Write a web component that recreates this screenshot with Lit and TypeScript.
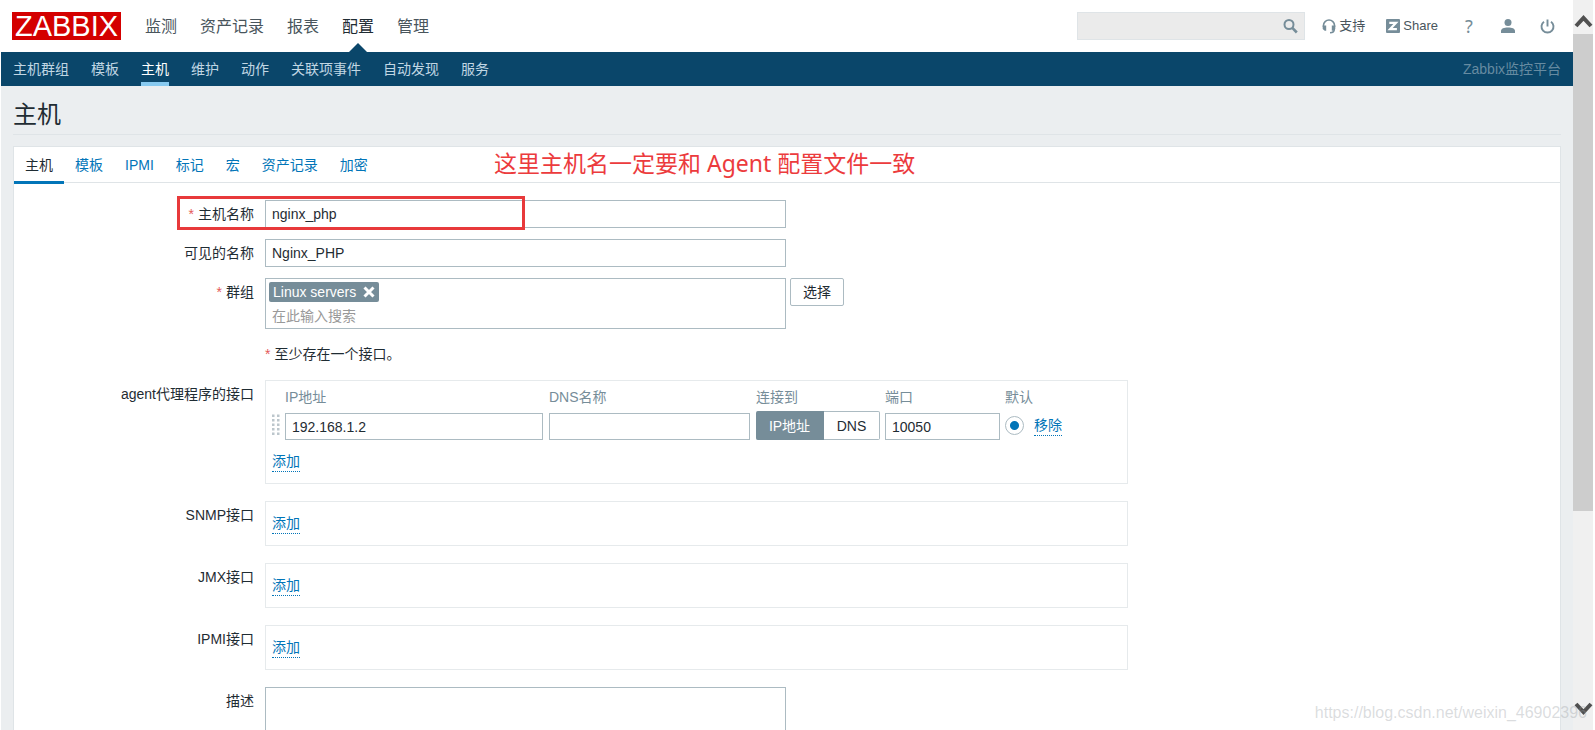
import { LitElement, html, css, svg } from "lit";
import { customElement } from "lit/decorators.js";

const MAIN_NAV = ["监测", "资产记录", "报表", "配置", "管理"];
const SUB_NAV = ["主机群组", "模板", "主机", "维护", "动作", "关联项事件", "自动发现", "服务"];
const TABS = ["主机", "模板", "IPMI", "标记", "宏", "资产记录", "加密"];
const OTHER_INTERFACES = ["SNMP接口", "JMX接口", "IPMI接口"];

const HANDLE_DOTS = [0, 1, 2, 3, 4].flatMap((row) => [0, 1].map((col) => ({ x: col * 5, y: row * 4.5 + 0.5 })));

@customElement("top-header")
class TopHeader extends LitElement {
  static styles = css`
    :host { display: block; }
    .bar { display: flex; align-items: center; height: 52px; padding: 0 18px 0 11px; background: #fff; }
    .logo { background: #d40000; color: #fff; font-size: 29px; line-height: 28px; width: 109px; text-align: center; text-decoration: none; }
    nav { display: flex; }
    .main { gap: 23px; margin-left: 24px; flex: 1; align-self: stretch; }
    .main a { position: relative; font-size: 16px; padding-top: 2px; line-height: 50px; color: #49555c; text-decoration: none; }
    .main a.on { color: #1f2c33; }
    .main a.on::after {
      content: ""; position: absolute; left: 50%; bottom: 0; margin-left: -9px;
      border: 9px solid transparent; border-top: 0; border-bottom-color: #0a466a;
    }
    .search { display: flex; width: 226px; height: 26px; border: 1px solid #dfe4e7; background: #ebebeb; }
    .search input { flex: 1; min-width: 0; border: 0; background: none; padding: 0 6px; outline: 0; font: inherit; }
    .search button { border: 0; background: none; padding: 0 6px; display: flex; align-items: center; }
    .tools { display: flex; align-items: center; margin-left: 17px; font-size: 13px; line-height: 20px; }
    .tools a { display: flex; align-items: center; gap: 3px; color: #49555c; text-decoration: none; margin-right: 21px; }
    .tools .icon { width: 16px; justify-content: center; margin: 0 0 0 23px; }
    .tools .icon.first { margin-left: 2px; }
    .tools .help { font: 18px/20px "Noto Sans", sans-serif; color: #768d99; }
    svg { display: block; }
    .sub { gap: 22px; height: 34px; background: #0a466a; padding: 0 12px; }
    .sub a { font-size: 14px; line-height: 34px; color: #c1d7e4; text-decoration: none; }
    .sub a.on { color: #fff; box-shadow: inset 0 -4px #87c9ef; }
    .server { margin-left: auto; font-size: 14px; line-height: 34px; color: #668ba1; }
  `;
  render() {
    return html`
      <header class="bar">
        <a class="logo" href="#">ZABBIX</a>
        <nav class="main">${MAIN_NAV.map((t) => html`<a href="#" class=${t === "配置" ? "on" : ""}>${t}</a>`)}</nav>
        <form class="search" role="search">
          <input type="text" aria-label="搜索" />
          <button type="button" aria-label="搜索">
            <svg width="15" height="15" viewBox="0 0 15 15" fill="none" stroke="#768d99"><circle cx="6" cy="5.500" r="4.500" stroke-width="2"/><path d="M9.300 8.800L13.800 13.500" stroke-width="2.600"/></svg>
          </button>
        </form>
        <div class="tools">
          <a href="#"><svg width="14" height="15" viewBox="0 0 14 15"><path d="M1.500 8V6.300a5.500 5.300 0 0 1 11 0V8M12.300 10c0 2.400-1.600 3.700-4.300 3.700" fill="none" stroke="#768d99" stroke-width="1.600"/><path d="M0.700 6.500h3.500v5.200H2.700L0.700 10zM13.300 6.500H9.800v5.200h1.500L13.300 10z" fill="#768d99"/></svg>支持</a>
          <a href="#"><svg width="14" height="14" viewBox="0 0 14 14"><rect width="14" height="14" rx="1" fill="#768d99"/><path d="M3.300 3.800h6.700L4 10.200h6.900" fill="none" stroke="#fff" stroke-width="2.200"/></svg>Share</a>
          <a href="#" class="icon first help" aria-label="帮助">?</a>
          <a href="#" class="icon" aria-label="用户"><svg width="14" height="14" viewBox="0 0 14 14" fill="#768d99"><circle cx="7" cy="3.500" r="3.500"/><path d="M0 14v-2c0-2.500 3-3.600 7-3.600s7 1.100 7 3.600v2z"/></svg></a>
          <a href="#" class="icon" aria-label="退出"><svg width="15" height="15" viewBox="0 0 15 15" fill="none" stroke="#768d99" stroke-width="1.900"><path d="M7.500 0.500V7.500M4 2.700a6 6 0 1 0 7 0"/></svg></a>
        </div>
      </header>
      <nav class="sub">
        ${SUB_NAV.map((t) => html`<a href="#" class=${t === "主机" ? "on" : ""}>${t}</a>`)}
        <span class="server">Zabbix监控平台</span>
      </nav>`;
  }
}

@customElement("host-form")
class HostForm extends LitElement {
  static styles = css`
    :host { display: block; }
    .row { display: flex; align-items: flex-start; gap: 11px; margin-bottom: 11px; }
    .row.wide { margin-bottom: 17px; }
    .label { width: 240px; flex: none; text-align: right; line-height: 28px; }
    .req::before { content: "*"; color: #e45959; margin-right: 4px; }
    .form { position: relative; padding-top: 17px; }
    input, textarea, button { font: inherit; color: inherit; box-sizing: border-box; margin: 0; }
    .text { height: 28px; border: 1px solid #acbbc2; background: #fff; padding: 0 6px; outline: 0; }
    .name { width: 521px; }
    .multi { width: 521px; box-sizing: border-box; border: 1px solid #acbbc2; padding: 3px; height: 51px; }
    .chip { display: inline-flex; align-items: center; gap: 7px; background: #768d99; color: #fff; border-radius: 2px; line-height: 20px; padding: 0 4px; vertical-align: top; }
    .chip button { border: 0; padding: 0; background: none; display: flex; }
    .multi input { display: block; width: 100%; height: 24px; border: 0; padding: 4px 3px 0; outline: 0; }
    .multi input::placeholder { color: #999; opacity: 1; }
    .btn { height: 28px; border: 1px solid #acbbc2; border-radius: 2px; background: #fff; padding: 0 12px; margin-left: -7px; }
    .hint { line-height: 28px; margin-bottom: 1px; }
    .box { width: 863px; box-sizing: border-box; border: 1px solid #e6eaec; padding: 12px 6px 11px; }
    .box.agent { padding-top: 6px; }
    .link { display: inline-block; vertical-align: top; line-height: 19px; color: #0275b8; text-decoration: none; border-bottom: 1px dotted #0275b8; }
    table { border-collapse: collapse; table-layout: fixed; width: 100%; margin-bottom: 12px; }
    th { font-weight: normal; text-align: left; color: #768d99; padding: 0 0 4px; line-height: 20px; }
    td { padding: 0; height: 29px; box-sizing: border-box; vertical-align: bottom; }
    td .text { display: block; width: 100%; height: 27px; }
    .c-handle { width: 13px; } .c-ip { width: 264px; } .c-dns { width: 207px; }
    .c-conn { width: 129px; } .c-port { width: 120px; } .c-def { width: 29px; }
    .pad6 { padding-right: 6px; } .pad5 { padding-right: 5px; }
    .handle { padding-bottom: 4px; }
    .handle svg { display: block; }
    .toggle { display: flex; height: 29px; border: 0; margin: 0; padding: 0; }
    .toggle label { flex: 1; display: flex; align-items: center; justify-content: center; box-sizing: border-box; border: 1px solid #acbbc2; border-left: 0; border-radius: 0 2px 2px 0; }
    .toggle label.on { flex: none; width: 68px; background: #768d99; border-color: #768d99; color: #fff; border-radius: 2px 0 0 2px; }
    .toggle input { position: absolute; opacity: 0; }
    .radio { appearance: none; display: block; width: 19px; height: 19px; border: 1px solid #acbbc2; border-radius: 50%; margin-bottom: 5px; background: radial-gradient(circle, #0275b8 4px, #fff 5px); }
    .actions { padding-bottom: 4px; }
    textarea { width: 521px; height: 104px; border: 1px solid #acbbc2; resize: none; display: block; }
    .mark { position: absolute; left: 163px; top: 13px; width: 348px; height: 34px; box-sizing: border-box; border: 3px solid #e8393b; pointer-events: none; }
  `;
  render() {
    return html`<form class="form">
      <div class="row">
        <label class="label req" for="host">主机名称</label>
        <input id="host" class="text name" type="text" value="nginx_php" />
      </div>
      <div class="row">
        <label class="label" for="visible">可见的名称</label>
        <input id="visible" class="text name" type="text" value="Nginx_PHP" />
      </div>
      <div class="row">
        <label class="label req" for="groups">群组</label>
        <div class="multi">
          <span class="chip">Linux servers<button type="button" aria-label="移除"><svg width="12" height="12" viewBox="0 0 12 12"><path d="M1.500 1.500l9 9M10.500 1.500l-9 9" stroke="#fff" stroke-width="3"/></svg></button></span>
          <input id="groups" type="text" placeholder="在此输入搜索" />
        </div>
        <button type="button" class="btn">选择</button>
      </div>
      <div class="row"><span class="label"></span><div class="hint req">至少存在一个接口。</div></div>
      <div class="row wide">
        <span class="label">agent代理程序的接口</span>
        <div class="box agent">
          <table>
            <colgroup><col class="c-handle"><col class="c-ip"><col class="c-dns"><col class="c-conn"><col class="c-port"><col class="c-def"><col></colgroup>
            <thead><tr><th></th><th>IP地址</th><th>DNS名称</th><th>连接到</th><th>端口</th><th colspan="2">默认</th></tr></thead>
            <tbody><tr>
              <td class="handle"><svg width="8" height="22" viewBox="0 0 8 22">${HANDLE_DOTS.map((d) => svg`<rect x=${d.x} y=${d.y} width="2.500" height="2.500" fill="#bcc6cc"/>`)}</svg></td>
              <td class="pad6"><input class="text" type="text" aria-label="IP地址" value="192.168.1.2" /></td>
              <td class="pad6"><input class="text" type="text" aria-label="DNS名称" /></td>
              <td class="pad5"><fieldset class="toggle" aria-label="连接到">
                <label class="on"><input type="radio" name="conn" checked />IP地址</label>
                <label><input type="radio" name="conn" />DNS</label>
              </fieldset></td>
              <td class="pad5"><input class="text" type="text" aria-label="端口" value="10050" /></td>
              <td><input class="radio" type="radio" name="default" aria-label="默认" checked /></td>
              <td class="actions"><a class="link" href="#">移除</a></td>
            </tr></tbody>
          </table>
          <a class="link" href="#">添加</a>
        </div>
      </div>
      ${OTHER_INTERFACES.map((name) => html`<div class="row wide"><span class="label">${name}</span><div class="box"><a class="link" href="#">添加</a></div></div>`)}
      <div class="row"><label class="label" for="desc">描述</label><textarea id="desc"></textarea></div>
      <div class="mark"></div>
    </form>`;
  }
}

@customElement("app-root")
class AppRoot extends LitElement {
  static styles = css`
    :host { display: flex; position: relative; height: 100vh; overflow: hidden; background: #fff; color: #1f2c33; font: 14px/20px "Liberation Sans", "Noto Sans CJK SC", sans-serif; }
    .page { flex: 1; min-width: 0; margin-left: 1px; background: #ebeef0; overflow: hidden; }
    main { padding: 0 12px; }
    h1 { font-size: 24px; font-weight: normal; line-height: 39px; padding-top: 9px; margin: 0 0 11px; border-bottom: 1px solid #dfe4e7; }
    .panel { background: #fff; border: 1px solid #dfe4e7; min-height: 700px; }
    .tabs { display: flex; position: relative; border-bottom: 1px solid #dfe4e7; height: 35px; }
    .tabs a { padding: 0 11px; line-height: 36px; height: 37px; box-sizing: border-box; color: #0275b8; text-decoration: none; }
    .tabs a.on { color: #1f2c33; border-bottom: 3px solid #0275b8; }
    .note { position: absolute; left: 480px; top: 0; font: 23px/32px "Noto Sans", "Noto Sans CJK SC", sans-serif; color: #ec3b3d; white-space: nowrap; }
    .scroll { display: flex; flex-direction: column; width: 20px; margin-right: 2px; background: #f0f0f0; }
    .scroll svg { display: block; flex: none; }
    .track { flex: 1; }
    .thumb { height: 72%; background: #cdcdcd; }
    .water { position: absolute; right: 8px; bottom: 7px; font-size: 16px; color: rgba(150, 155, 160, 0.35); }
  `;
  render() {
    return html`
      <div class="page">
        <top-header></top-header>
        <main>
          <h1>主机</h1>
          <section class="panel">
            <nav class="tabs">
              ${TABS.map((t, i) => html`<a href="#" class=${i === 0 ? "on" : ""}>${t}</a>`)}
              <span class="note">这里主机名一定要和 Agent 配置文件一致</span>
            </nav>
            <host-form></host-form>
          </section>
        </main>
      </div>
      <div class="scroll">
        <svg width="20" height="34" viewBox="0 0 20 34"><path d="M3 26l7.500-8L18 26" fill="none" stroke="#505050" stroke-width="4"/></svg>
        <div class="track"><div class="thumb"></div></div>
        <svg width="20" height="34" viewBox="0 0 20 34"><path d="M3 8l7.500 8L18 8" fill="none" stroke="#505050" stroke-width="4"/></svg>
      </div>
      <div class="water">https://blog.csdn.net/weixin_46902396</div>`;
  }
}
